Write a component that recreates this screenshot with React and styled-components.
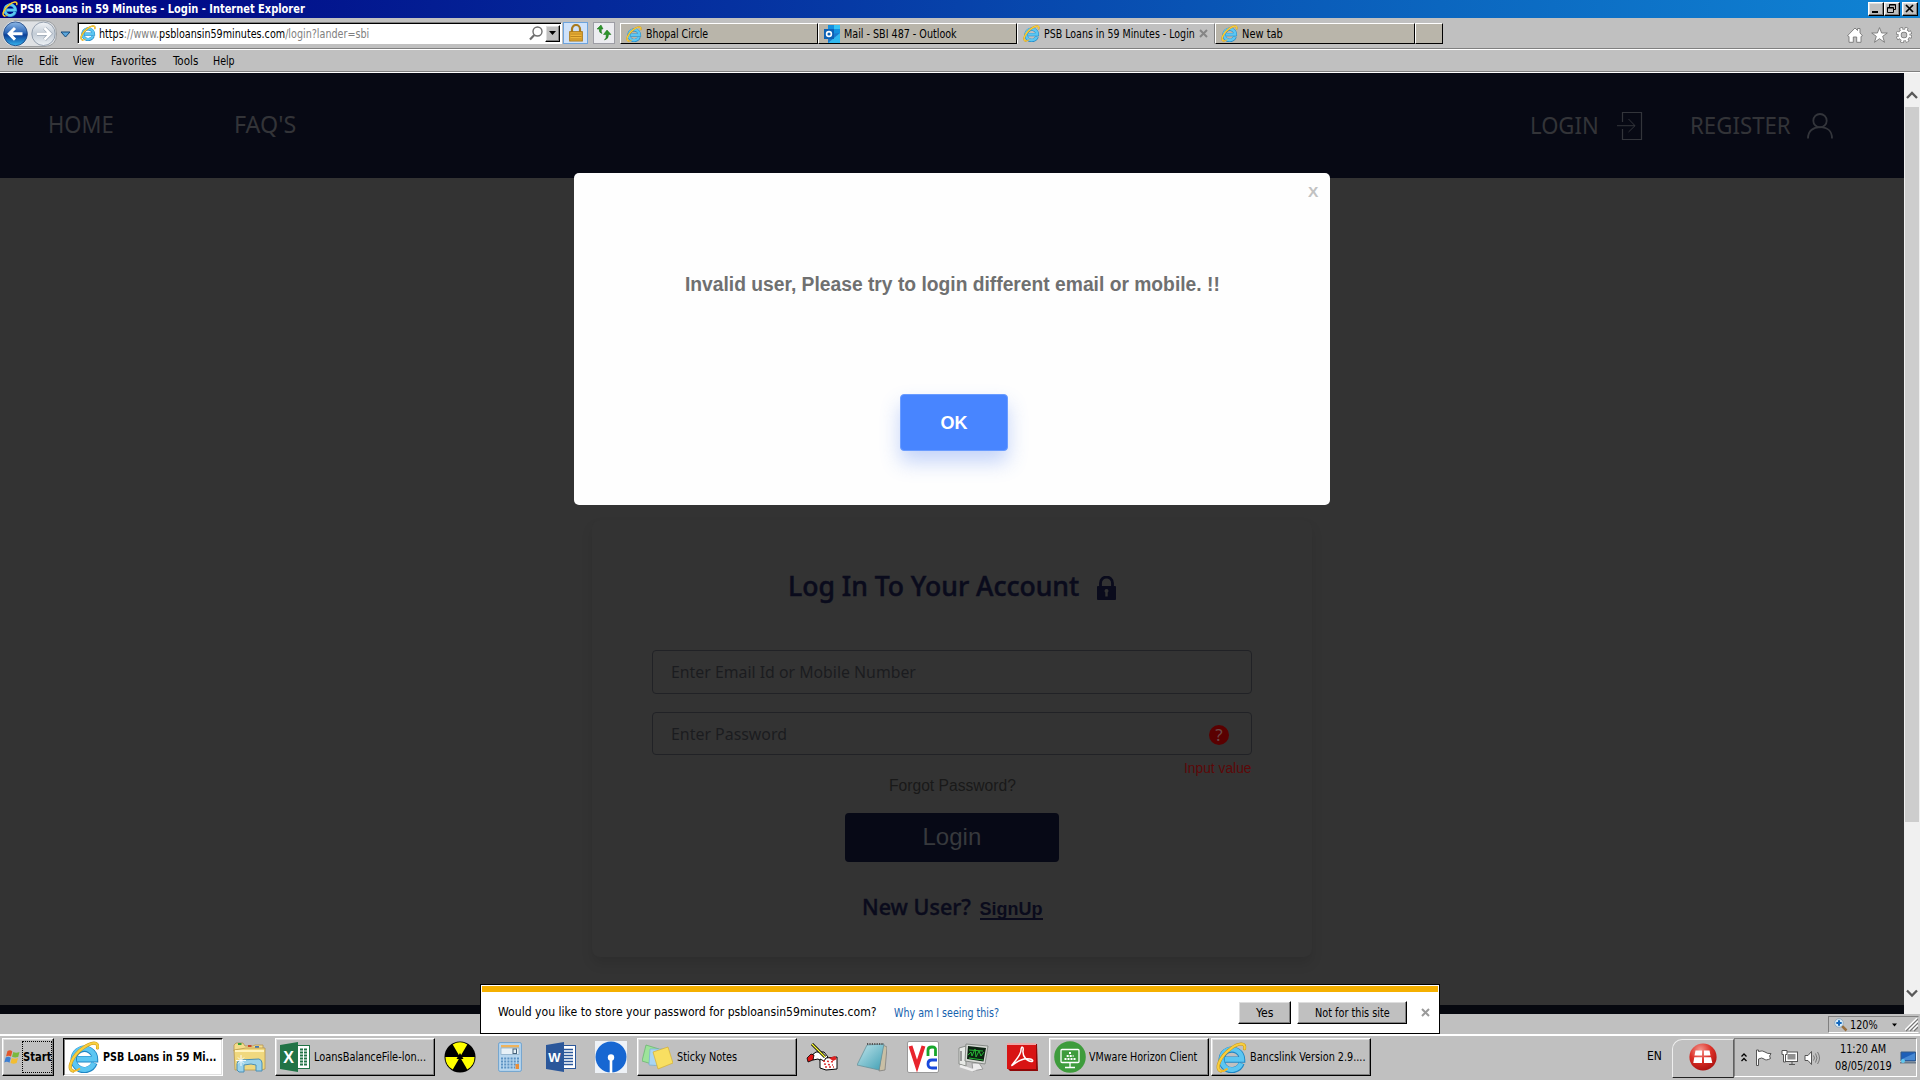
import React, { useLayoutEffect, useRef, useState } from "react";
import styled, { createGlobalStyle, css } from "styled-components";

const tahoma = `"DejaVu Sans Condensed", "DejaVu Sans", sans-serif`;
const myriad = `"Noto Sans", "Open Sans", sans-serif`;
const arial = `"Liberation Sans", sans-serif`;

const GlobalStyle = createGlobalStyle`
  * { box-sizing: border-box; }
  html, body { margin: 0; overflow: hidden; }
  body { font-family: ${tahoma}; font-size: 11.5px; color: #000; }
  svg { display: block; flex: none; }
`;

const FitBox = styled.span`
  display: block;
  flex: none;
  white-space: nowrap;
  font-stretch: condensed;
`;
const FitInner = styled.span`
  display: inline-block;
  transform-origin: 0 50%;
`;

/* Condenses a run of text to an exact width. */
function Fit({ w, children }) {
  const ref = useRef(null);
  const [scale, setScale] = useState(1);
  useLayoutEffect(() => {
    const natural = ref.current.offsetWidth;
    if (natural) setScale(w / natural);
  }, [w]);
  return (
    <FitBox style={{ width: w }}>
      <FitInner ref={ref} style={{ transform: `scaleX(${scale})` }}>
        {children}
      </FitInner>
    </FitBox>
  );
}

const raised = css`
  border: 1px solid;
  border-color: #fff #000 #000 #fff;
  box-shadow: inset -1px -1px 0 #808080, inset 1px 1px 0 #dedede;
`;

const Screen = styled.div`
  width: 1920px;
  height: 1080px;
  display: flex;
  flex-direction: column;
  position: relative;
  overflow: hidden;
  background: #c0c0c0;
`;

const TitleBar = styled.header`
  height: 18px;
  flex: none;
  display: flex;
  align-items: center;
  padding: 0 2px 0 2px;
  gap: 2px;
  color: #fff;
  font-weight: 700;
  line-height: 18px;
  background: linear-gradient(90deg, #000080 0%, #0531a0 38%, #0b66bf 75%, #1084d4 100%);
`;
const Spacer = styled.div`
  flex: 1;
`;
const WindowButton = styled.div`
  width: 16px;
  height: 14px;
  background: #c0c0c0;
  margin-left: ${(p) => p.$ml || 0}px;
  ${raised}
`;
const WindowButtons = styled.div`
  display: flex;
`;

const Toolbar = styled.div`
  height: 32px;
  flex: none;
  display: flex;
  padding: 4px 8px 0 0;
  border-bottom: 1px solid #fff;
  box-shadow: inset 0 -1px 0 #808080;
`;
const NavCluster = styled.div`
  width: 77px;
  height: 26px;
  margin-top: -2px;
`;
const AddressBar = styled.div`
  width: 485px;
  height: 22px;
  display: flex;
  align-items: center;
  background: #fff;
  padding: 0 1px 0 2px;
  border: 1px solid;
  border-color: #808080 #fff #fff #808080;
  box-shadow: inset 1px 1px 0 #000;
  color: #808080;
  b { font-weight: 400; color: #000; }
`;
const UrlText = styled.div`
  margin-left: 3px;
  padding-top: 2px;
  flex: 1;
  line-height: 18px;
`;
const DropButton = styled.div`
  width: 15px;
  height: 17px;
  margin-left: 2px;
  background: #c0c0c0;
  display: flex;
  align-items: center;
  justify-content: center;
  ${raised}
`;
const ToolButton = styled.div`
  width: ${(p) => p.$w}px;
  height: 22px;
  margin-left: ${(p) => p.$ml}px;
  border: 1px solid ${(p) => p.$edge};
  background: ${(p) => p.$bg};
  display: flex;
  align-items: center;
  justify-content: center;
`;
const TabStrip = styled.div`
  display: flex;
  margin-left: 5px;
  height: 22px;
`;
const Tab = styled.div`
  width: ${(p) => p.$w}px;
  display: flex;
  align-items: center;
  gap: 4px;
  padding-left: 5px;
  margin-top: 1px;
  height: 21px;
  line-height: 20px;
  background: ${(p) => (p.$active ? "#c0c0c0" : "#b9b5aa")};
  border: 1px solid;
  border-color: #fff ${(p) => (p.$active ? "#808080" : "#000")} ${(p) => (p.$active ? "#c0c0c0" : "#000")} #fff;
`;
const CommandIcons = styled.div`
  display: flex;
  gap: 8px;
  margin-top: 5px;
`;

const MenuBar = styled.nav`
  height: 23px;
  flex: none;
  display: flex;
  padding-left: 7px;
  line-height: 23px;
  border-bottom: 1px solid #fff;
  box-shadow: inset 0 -1px 0 #808080;
`;
const MenuItem = styled.div`
  margin-right: ${(p) => p.$mr}px;
`;

const Viewport = styled.div`
  height: 941px;
  flex: none;
  display: flex;
`;
const Page = styled.div`
  width: 1904px;
  display: flex;
  flex-direction: column;
  background: #333;
  position: relative;
`;
const SiteNav = styled.nav`
  height: 105px;
  flex: none;
  display: flex;
  align-items: center;
  padding: 0 71px 0 48px;
  background: #070914;
  color: #333438;
  font: 24px/34px ${myriad};
`;
const NavLink = styled.div`
  display: flex;
  align-items: center;
  margin: ${(p) => p.$top || 0}px 0 0 ${(p) => p.$ml || 0}px;
  gap: ${(p) => p.$gap || 0}px;
  > span { padding-bottom: 2px; }
`;
const Main = styled.main`
  flex: 1;
  padding-top: 342px;
`;
const SiteFooter = styled.footer`
  height: 9px;
  background: #06080f;
`;

const Card = styled.section`
  width: 720px;
  height: 437px;
  margin: 0 auto;
  padding: 46px 60px 0;
  border-radius: 8px;
  background: #333;
  box-shadow: 0 7px 12px rgba(0, 0, 0, 0.1);
  display: flex;
  flex-direction: column;
`;
const Heading = styled.h1`
  margin: 0 0 44px 136px;
  height: 40px;
  display: flex;
  align-items: center;
  gap: 18px;
  font: 500 27px/40px ${myriad};
  -webkit-text-stroke: 0.5px #0a0b1c;
  color: #0a0b1c;
  svg { margin-top: 4px; }
`;
const Field = styled.div`
  height: ${(p) => p.$h}px;
  flex: none;
  display: flex;
  align-items: center;
  justify-content: space-between;
  margin-top: ${(p) => p.$mt || 0}px;
  padding: 0 22px 0 18px;
  border: 1px solid #212226;
  border-radius: 4px;
  color: #1b1c1f;
  font: 17px/40px ${myriad};
`;
const HelpBadge = styled.div`
  width: 20px;
  height: 20px;
  margin-top: 2px;
  border-radius: 50%;
  background: #5a0000;
  color: #6b4a4a;
  text-align: center;
  font: 17px/20px ${myriad};
`;
const FieldError = styled.div`
  display: flex;
  justify-content: flex-end;
  margin-top: 5px;
  font: 14px/16px ${arial};
  color: #5c0808;
`;
const ForgotLink = styled.div`
  display: flex;
  justify-content: center;
  font: 16px/20px ${arial};
  color: #191919;
`;
const LoginButton = styled.div`
  width: 214px;
  height: 49px;
  margin: 17px auto 0;
  display: flex;
  align-items: center;
  justify-content: center;
  border-radius: 4px;
  background: #070916;
  color: #37393d;
  font: 24px/47px ${arial};
  padding-bottom: 2px;
`;
const SignUpRow = styled.div`
  height: 30px;
  margin-top: 30px;
  display: flex;
  justify-content: center;
  gap: 9px;
  color: #0a0b1c;
  font: 500 22.5px/30px ${myriad};
  > span { -webkit-text-stroke: 0.4px #0a0b1c; }
`;
const SignUpLink = styled.div`
  margin-top: 6px;
  height: 22px;
  border-bottom: 2px solid #0a0b1c;
  font: 700 18px/22px ${arial};
`;

const Modal = styled.div`
  position: absolute;
  left: 574px;
  top: 100px;
  width: 756px;
  height: 332px;
  border-radius: 5px;
  background: #fefefe;
  display: flex;
  flex-direction: column;
  align-items: center;
`;
const CloseText = styled.div`
  align-self: flex-end;
  margin: 10px 12px 0 0;
  height: 18px;
  font: 700 14px/18px ${arial};
  color: #c2c2c2;
`;
const ModalMessage = styled.div`
  margin-top: 70px;
  font: 700 19.5px/26px ${arial};
  color: #6f7070;
`;
const OkButton = styled.div`
  width: 108px;
  height: 57px;
  margin: 97px 0 0 4px;
  display: flex;
  align-items: center;
  justify-content: center;
  border: 1px solid #6a9cff;
  border-radius: 4px;
  background: #4885ff;
  box-shadow: 0 11px 20px rgba(72, 122, 240, 0.32);
  color: #fff;
  font: 700 18px/54px ${arial};
`;

const ScrollBar = styled.div`
  width: 16px;
  background: #f0f0f0;
  display: flex;
  flex-direction: column;
  align-items: center;
  padding: 18px 0 16px;
`;
const Thumb = styled.div`
  width: 14px;
  height: 715px;
  margin-top: 7px;
  background: #cdcdcd;
`;

const StatusBar = styled.div`
  height: 20px;
  flex: none;
  display: flex;
  justify-content: flex-end;
  padding: 2px 1px 1px;
`;
const ZoomBox = styled.div`
  width: 91px;
  display: flex;
  align-items: center;
  padding-left: 5px;
  line-height: 16px;
  border: 1px solid;
  border-color: #808080 transparent #fff #808080;
`;

const Prompt = styled.div`
  position: absolute;
  left: 480px;
  top: 984px;
  width: 960px;
  height: 50px;
  border: 1px solid #000;
  background: #fff;
  padding: 1px;
`;
const PromptStripe = styled.div`
  height: 6px;
  background: #f5b000;
`;
const PromptRow = styled.div`
  height: 40px;
  display: flex;
  align-items: center;
  padding: 1px 8px 0 16px;
`;
const PromptText = styled.div`
  font-size: 12.5px;
  line-height: 20px;
  padding-bottom: 1px;
`;
const PromptLink = styled.div`
  margin-left: 17px;
  color: #1461ae;
  line-height: 20px;
`;
const PromptButton = styled.div`
  width: ${(p) => p.$w}px;
  height: 23px;
  margin-right: 6px;
  display: flex;
  justify-content: center;
  line-height: 22px;
  background: #c0c0c0;
  ${raised}
`;

const TaskBar = styled.footer`
  height: 46px;
  flex: none;
  display: flex;
  align-items: flex-start;
  border-top: 2px solid #fff;
  padding: 2px 3px 0 2px;
`;
const StartButton = styled.div`
  width: 52px;
  height: 38px;
  display: flex;
  align-items: center;
  padding-left: 1px;
  font-weight: 700;
  background: #c0c0c0;
  ${raised}
`;
const StartLabel = styled.div`
  height: 32px;
  line-height: 31px;
  border: 1px dotted #000;
  margin-left: 1px;
`;
const TaskButton = styled.div`
  width: 160px;
  height: 38px;
  display: flex;
  align-items: center;
  gap: ${(p) => p.$gap || 4}px;
  margin-left: ${(p) => p.$ml}px;
  padding-left: 4px;
  line-height: 35px;
  ${raised}
  ${(p) =>
    p.$active &&
    css`
      font-weight: 700;
      background: #fff;
      border-color: #000 #fff #fff #000;
      box-shadow: inset 1px 1px 0 #808080, inset -1px -1px 0 #e0e0e0;
    `}
`;
const TaskIcon = styled.div`
  width: 32px;
  height: 38px;
  display: flex;
  align-items: center;
  justify-content: center;
  margin-left: ${(p) => p.$ml}px;
`;
const Language = styled.div`
  line-height: 36px;
  font-size: 12px;
  margin-right: 10px;
`;
const RedLauncher = styled.div`
  width: 62px;
  height: 39px;
  margin-top: 1px;
  padding-bottom: 3px;
  display: flex;
  align-items: center;
  justify-content: center;
  border: 1px solid;
  border-color: #eee #606060 #222 #eee;
  border-top-left-radius: 10px;
`;
const Tray = styled.div`
  width: 183px;
  height: 39px;
  display: flex;
  align-items: center;
  padding-left: 6px;
  border: 1px solid;
  border-color: #808080 #fff #fff #808080;
`;
const Clock = styled.div`
  width: 56px;
  margin: 0 9px 0 14px;
  padding-top: 1px;
  display: flex;
  flex-direction: column;
  align-items: center;
  line-height: 17px;
`;
const TrayGap = styled.div`
  width: ${(p) => p.$w}px;
`;

const IE = ({ s }) => (
  <svg width={s} height={s} viewBox="0 0 32 32" fill="none">
    <path d="M26.4 22 A10.6 10.6 0 1 1 27 18.2 H9" stroke="#1f86c4" strokeWidth="6.4" />
    <path d="M26 22 A10.6 10.6 0 1 1 26.8 18 H9" stroke="#5cc6f2" strokeWidth="4.8" />
    <path d="M5 30 C-2 28 5 14 15 7 C23 1 31 0 29.500 7" stroke="#c99612" strokeWidth="3.2" strokeLinecap="round" />
    <path d="M5 30 C-2 28 5 14 15 7 C23 1 31 0 29.500 7" stroke="#f8ce3e" strokeWidth="2.2" strokeLinecap="round" />
    <path d="M5 30 C8 30.500 10 29 12 27.500" stroke="#f0b82a" strokeWidth="2" />
  </svg>
);

const Caret = ({ w = 7 }) => (
  <svg width={w} height="4" viewBox="0 0 7 4"><path d="M0 0H7L3.500 4Z" fill="#000" /></svg>
);

const NavArrows = () => (
  <svg width="77" height="29" viewBox="0 0 77 29">
    <defs>
      <linearGradient id="back" x1="0" y1="0" x2="0" y2="1">
        <stop offset="0" stopColor="#8eb8e6" /><stop offset=".45" stopColor="#2d67b8" />
        <stop offset=".55" stopColor="#0a3e98" /><stop offset="1" stopColor="#37b4ee" />
      </linearGradient>
      <linearGradient id="fwd" x1="0" y1="0" x2="0" y2="1">
        <stop offset="0" stopColor="#f2f4f7" /><stop offset=".5" stopColor="#c3ccd6" /><stop offset="1" stopColor="#eef2f6" />
      </linearGradient>
    </defs>
    <path d="M14 .8 H45 Q56.500 2 56.500 14 Q56.500 26 45 26.500 H14 Z" fill="#dfe1e4" stroke="#8d8f92" strokeWidth=".8" />
    <circle cx="15.500" cy="13.800" r="12.800" fill="#e8edf4" />
    <circle cx="15.500" cy="13.800" r="11.900" fill="url(#back)" stroke="#173d78" strokeWidth=".8" />
    <path d="M9 13.800H22.500M15 8L9.200 13.800L15 19.600" fill="none" stroke="#fff" strokeWidth="3" />
    <circle cx="43.500" cy="13.800" r="11.700" fill="url(#fwd)" stroke="#8c98a8" strokeWidth=".9" />
    <path d="M37 13.800H50M44.500 8L50.200 13.800L44.500 19.600" fill="none" stroke="#9aa5b3" strokeWidth="3.800" />
    <path d="M37 13.800H50M44.500 8L50.200 13.800L44.500 19.600" fill="none" stroke="#fff" strokeWidth="2.600" />
    <path d="M61 12H70L65.500 17Z" fill="#5aa6dc" stroke="#154a7a" strokeWidth="1" />
  </svg>
);

const Magnifier = () => (
  <svg width="15" height="15" viewBox="0 0 15 15" fill="none" stroke="#6e6e6e">
    <circle cx="9.500" cy="5.500" r="4.500" strokeWidth="1.400" /><path d="M6.300 9L2 13.500" strokeWidth="2.200" />
  </svg>
);
const GoldLock = () => (
  <svg width="14" height="18" viewBox="0 0 14 18">
    <path d="M3 9V5a4 4 0 0 1 8 0V9" fill="none" stroke="#a87a20" strokeWidth="2.200" />
    <rect x=".7" y="7.700" width="12.600" height="9.300" fill="#eeb53a" stroke="#a87413" />
    <path d="M1.500 10H12.500M1.500 12.500H12.500M1.500 15H12.500" stroke="#bb8420" />
  </svg>
);
const Refresh = () => (
  <svg width="16" height="16" viewBox="0 0 16 16" fill="#2d962b" stroke="#176c17" strokeWidth=".5">
    <path d="M6 1L2 5H4.200Q4 9 7 9.500Q6 8 6.300 5H8Z" transform="translate(-1 -1)" />
    <path d="M11 5L15 9.500H12.500Q12.500 14 8.500 15Q10.500 13 10.300 9.500H7.500Z" />
  </svg>
);
const Outlook = () => (
  <svg width="16" height="18" viewBox="0 0 16 18">
    <rect x="4" y="0" width="12" height="9" fill="#1490df" /><rect x="10" y="0" width="6" height="4" fill="#35c4f5" />
    <path d="M4 9L16 8V18H4Z" fill="#1a78ce" /><path d="M16 8L4 18H16Z" fill="#30b8ef" />
    <rect x="0" y="4" width="10" height="10" fill="#0d62b5" />
    <circle cx="5" cy="9" r="2.400" fill="none" stroke="#fff" strokeWidth="1.600" />
  </svg>
);
const House = () => (
  <svg width="16" height="16" viewBox="0 0 16 16">
    <path d="M8 1L10.500 3.500V1.500H13V6L15.500 8.700L14 9.500V15.300H9.700V10H6.300V15.300H2V9.500L.5 8.700Z" fill="#fff" stroke="#777" strokeWidth=".9" />
  </svg>
);
const Star = () => (
  <svg width="17" height="16" viewBox="0 0 17 16">
    <path d="M8.500 .6L10.600 6H16.300L11.700 9.300L13.500 15.300L8.500 11.700L3.500 15.300L5.300 9.300L.7 6H6.400Z" fill="#fff" stroke="#777" strokeWidth=".9" />
  </svg>
);
const Gear = () => (
  <svg width="16" height="16" viewBox="0 0 16 16">
    <g fill="none"><circle cx="8" cy="8" r="6" stroke="#777" strokeWidth="4.200" strokeDasharray="2.900 1.812" />
      <circle cx="8" cy="8" r="4.400" stroke="#777" strokeWidth="3.800" />
      <circle cx="8" cy="8" r="6" stroke="#fff" strokeWidth="2.800" strokeDasharray="1.900 2.812" strokeDashoffset="-.5" />
      <circle cx="8" cy="8" r="4.400" stroke="#fff" strokeWidth="2.300" /></g>
  </svg>
);
const LoginGlyph = () => (
  <svg width="26" height="30" viewBox="0 0 26 30" fill="none" stroke="#33353b">
    <path d="M5.500 11V1.500H24.500V28.500H5.500V18" strokeWidth="1.200" /><path d="M0 14.700H18M11.500 8L18 14.700L11.500 21" />
  </svg>
);
const UserGlyph = () => (
  <svg width="26" height="26" viewBox="0 0 26 26" fill="none" stroke="#33353b" strokeWidth="1.800">
    <circle cx="13" cy="7.700" r="6.700" /><path d="M1 25.500C1 18 6 14.200 13 14.200S25 18 25 25.500" />
  </svg>
);
const Padlock = () => (
  <svg width="19" height="24" viewBox="0 0 19 24">
    <path d="M3.500 11V7a6 6 0 0 1 12 0V11" fill="none" stroke="#0a0b1c" strokeWidth="2.800" />
    <rect y="10" width="19" height="14" rx="1" fill="#0a0b1c" />
    <path d="M9.500 13a2 2 0 0 1 1.200 3.600V20.500H8.300V16.600A2 2 0 0 1 9.500 13Z" fill="#333" />
  </svg>
);
const Chevron = ({ down }) => (
  <svg width="12" height="9" viewBox="0 0 12 9" fill="none" stroke="#595959" strokeWidth="2.300">
    <path d={down ? "M1 1.500L6 6.500L11 1.500" : "M1 7L6 2L11 7"} />
  </svg>
);

const WinFlag = () => (
  <svg width="17" height="17" viewBox="0 0 17 17">
    <path d="M3.500 2Q6.500 .5 8.300 2.500L7 7.500Q4.500 6 2 7.500Z" fill="#e2562a" />
    <path d="M9.300 3Q12 4.500 15.500 3L14.200 8Q11 9 8 7.800Z" fill="#7ab93c" />
    <path d="M1.700 8.500Q4.500 7 6.800 8.800L5.500 13.800Q3 12 .3 13.500Z" fill="#3d7fd2" />
    <path d="M7.800 9Q10.500 10.300 14 9L12.700 14Q9.500 15.300 6.500 14Z" fill="#f2bd32" />
  </svg>
);
const Folder = () => (
  <svg width="33" height="32" viewBox="0 0 33 32">
    <path d="M1 4L3 2H10L12 5H20L22 4H30V10H1Z" fill="#f4dd8c" stroke="#b69650" strokeWidth=".8" />
    <rect x="5" y="2" width="3.500" height="2" fill="#35a137" /><rect x="15" y="4" width="3.500" height="2" fill="#c94a2c" /><rect x="22" y="5" width="4" height="2" fill="#3f78bd" />
    <path d="M1 9L13 7H32V28L28 29H2Z" fill="#f0d87e" stroke="#b8984b" strokeWidth=".8" />
    <path d="M2 10H31" stroke="#fff3bd" strokeWidth="2" />
    <path d="M4 29V23Q4 20 7 19L26 18Q29 19 29 22V30H23V24Q19 22 11 24V31H6Z" fill="#9bd2ea" stroke="#4a8fb5" />
    <path d="M8 14V25M3 19.500H13M5 16.500L11 22.500M11 16.500L5 22.500" stroke="#fff" strokeWidth=".9" />
  </svg>
);
const SheetLetter = styled.text`
  font-family: ${arial};
  font-weight: 700;
  text-anchor: middle;
  fill: #fff;
`;
const Sheet = ({ color, letter }) => (
  <svg width="30" height="30" viewBox="0 0 30 30">
    <rect x="14" y="3.500" width="15.500" height="23" fill="#fff" stroke={color} />
    {letter === "X"
      ? <path d="M20 7.500H27M20 10.500H27M20 13.500H27M20 16.500H27M20 19.500H27M20 22.500H27" stroke={color} strokeWidth="1.900" strokeDasharray="3 1" />
      : <path d="M18 7.500H27M18 10.500H27M18 13.500H27M18 16.500H27M18 19.500H27M18 22.500H27" stroke={color} strokeWidth="1.500" />}
    <path d="M0 3L18 0V30L0 27Z" fill={color} />
    <SheetLetter x="8.500" y={letter === "X" ? 20.5 : 19.5} fontSize={letter === "X" ? 16 : 13}>{letter}</SheetLetter>
  </svg>
);
const Radiation = () => (
  <svg width="32" height="32" viewBox="0 0 32 32">
    <circle cx="16" cy="16" r="15.500" fill="#000" />
    <g fill="#ff0">
      <path d="M16 16L8.700 3.400A14.500 14.500 0 0 1 23.300 3.400Z" />
      <path d="M16 16L8.700 3.400A14.500 14.500 0 0 1 23.300 3.400Z" transform="rotate(120 16 16)" />
      <path d="M16 16L8.700 3.400A14.500 14.500 0 0 1 23.300 3.400Z" transform="rotate(240 16 16)" />
    </g>
    <path d="M16 12L19.500 18H12.500Z" fill="#000" />
  </svg>
);
const Calculator = () => (
  <svg width="24" height="30" viewBox="0 0 24 30">
    <rect x=".6" y=".6" width="22.800" height="28.800" rx="1.500" fill="#b8d7ef" stroke="#6fa3ce" />
    <rect x="3" y="3" width="18" height="2.500" fill="#eeb35c" />
    <rect x="3" y="6" width="18" height="6.500" fill="#e7f1f7" stroke="#83a7c2" strokeWidth=".7" />
    <rect x="15" y="7" width="3.500" height="4.500" fill="none" stroke="#46637a" />
    <path d="M3 16.500H21M3 19.500H21M3 22.500H21M3 25.500H17" stroke="#5d93c3" strokeWidth="2" strokeDasharray="2 1.200" />
    <rect x="17.500" y="22" width="3.500" height="5" fill="#e88e3a" />
  </svg>
);
const Keyhole = () => (
  <svg width="32" height="32" viewBox="0 0 32 32">
    <rect width="32" height="32" fill="#eef2f7" /><circle cx="16" cy="16" r="15.500" fill="#1767d2" />
    <circle cx="16" cy="16.500" r="3.200" fill="#fff" /><rect x="14.700" y="17" width="2.600" height="15" fill="#fff" />
  </svg>
);
const Notes = () => (
  <svg width="31" height="26" viewBox="0 0 31 26">
    <path d="M4 1L17 5L13 21L0 17Z" fill="#9de39a" stroke="#62b367" strokeWidth=".7" />
    <path d="M8 5L23 5L22 22L7 21Z" fill="#a9d5f3" stroke="#75aed2" strokeWidth=".7" />
    <path d="M11 8L26 3L31 19L16 25Z" fill="#f8df61" stroke="#d4ae32" strokeWidth=".7" />
  </svg>
);
const Painter = () => (
  <svg width="32" height="28" viewBox="0 0 32 28">
    <path d="M6 12L10 9H18L22 14L17 19L12 16L7 17Z" fill="#fff" stroke="#000" />
    <path d="M1 15L5 11L8 12L7 17L2 19Z" fill="#e01515" stroke="#000" strokeWidth=".8" />
    <path d="M6 1L19 14" stroke="#000" strokeWidth="3" /><path d="M6 1L19 14" stroke="#ff3" strokeWidth="1.300" />
    <path d="M14 16L18 18L20 15L31 14V26L20 27L14 25Z" fill="#fff" stroke="#000" />
    <path d="M17 18L29 19M18 21L27 22M19 24H28" stroke="#d33" strokeWidth="1.500" strokeDasharray="2 2" />
    <path d="M23 15L29 13L31 16L27 18Z" fill="#d22" />
  </svg>
);
const NotepadIcon = () => (
  <svg width="30" height="30" viewBox="0 0 30 30">
    <defs><linearGradient id="pad" x1="0" y1="0" x2="1" y2="1"><stop offset="0" stopColor="#c3e6ec" /><stop offset="1" stopColor="#3f9fb4" /></linearGradient></defs>
    <path d="M26 3L30 5L28 28L22 29Z" fill="#c9bfa5" stroke="#777" strokeWidth=".7" />
    <path d="M10 3L27 2L22 28L0 23Z" fill="url(#pad)" stroke="#68929b" strokeWidth=".8" />
    <path d="M10 2H27" stroke="#555" strokeWidth="2" strokeDasharray="1.200 1.200" />
  </svg>
);
const Vnc = () => (
  <svg width="32" height="32" viewBox="0 0 32 32" fill="none">
    <rect x=".5" y=".5" width="31" height="31" rx="1.500" fill="#fff" stroke="#999" />
    <path d="M3.500 5L10 25L16.500 5" stroke="#e8252d" strokeWidth="4" />
    <path d="M21 15V9Q21 6 25 6T28.500 9V15" stroke="#18a62c" strokeWidth="2.800" />
    <path d="M30 19H25Q21 19 21 23T25 27H30" stroke="#1949dc" strokeWidth="2.800" />
  </svg>
);
const Monitor = () => (
  <svg width="31" height="29" viewBox="0 0 31 29">
    <path d="M1 5L8 3V23L1 21Z" fill="#e7e9e6" stroke="#898c88" /><path d="M3 8V18" stroke="#999" strokeWidth="2" />
    <path d="M14 20L21 20L25 26L15 28Z" fill="#ececec" stroke="#999" /><path d="M2 23L14 27L18 26" stroke="#eee" strokeWidth="2.500" fill="none" />
    <path d="M8 1L30 3L27 21L7 18Z" fill="#d7dad5" stroke="#868986" />
    <path d="M10 3L28 5L25.500 18.500L9 16Z" fill="#0c2211" />
    <path d="M10 12L13 9L14 13L17 6L18 14L21 8L23 13L26 9M11 7L25 8M11 15L25 17" fill="none" stroke="#27b536" />
  </svg>
);
const Acrobat = () => (
  <svg width="31" height="28" viewBox="0 0 31 28">
    <path d="M0 1H30L31 28H3L0 25Z" fill="#8f0808" /><rect x="0" y="0" width="29" height="26" fill="#d81414" /><path d="M0 0H29V2H0Z" fill="#eda7a7" />
    <path d="M5 22C8 18 14 12 14 7C14 3 17 3 16 8C15.500 13 20 19 25 18.500C28 17 21 14 14 17C9 18.500 4 24 5 22Z" fill="none" stroke="#fff" strokeWidth="1.500" />
  </svg>
);
const Horizon = () => (
  <svg width="32" height="32" viewBox="0 0 32 32" fill="none">
    <circle cx="16" cy="16" r="15.800" fill="#3e9c3c" />
    <rect x="7" y="8.500" width="18" height="13" rx="1" stroke="#fff" strokeWidth="1.300" />
    <path d="M16 22V26M11 26.500H21" stroke="#fff" strokeWidth="1.300" />
    <path d="M15 12H17M12.700 15H19.500M10.500 18H22" stroke="#fff" strokeWidth="2" strokeDasharray="2 1" />
  </svg>
);
const RedWindows = () => (
  <svg width="28" height="28" viewBox="0 0 28 28">
    <defs><radialGradient id="red" cx=".4" cy=".25" r=".8"><stop offset="0" stopColor="#f49a91" /><stop offset=".5" stopColor="#dc3027" /><stop offset="1" stopColor="#a60f0d" /></radialGradient></defs>
    <circle cx="14" cy="14" r="13.600" fill="url(#red)" />
    <path d="M6.500 7.500H13V12.500H5.500ZM15 7.500H20.500L21.500 12.500H15ZM5.300 14.300H13V20H4.300ZM15 14.300H22L23.300 20H15Z" fill="#fff" />
  </svg>
);
const DoubleUp = () => (
  <svg width="6" height="9" viewBox="0 0 6 9" fill="none" stroke="#000" strokeWidth="1.300"><path d="M.5 3.500L3 1L5.500 3.500M.5 8L3 5.500L5.500 8" /></svg>
);
const FlagIcon = () => (
  <svg width="17" height="17" viewBox="0 0 17 17"><path d="M1.500 1V16.500H3.500V10Q7 8 9 10T15.500 9.500Q13.500 7 16 4.500Q12.500 5 10 3T3.500 2.500V1Z" fill="#fff" stroke="#555" /></svg>
);
const NetIcon = () => (
  <svg width="17" height="17" viewBox="0 0 17 17" stroke="#555">
    <rect x="4.500" y="3" width="12" height="9.500" fill="#fff" /><rect x="6.500" y="5" width="8" height="5.500" fill="#909090" stroke="none" />
    <path d="M8 15.500H14M11 12.500V15" fill="none" /><path d="M1 1.500V5.500H2.500V13H4.500V5.500H6V1.500Z" fill="#fff" />
  </svg>
);
const SoundIcon = () => (
  <svg width="17" height="16" viewBox="0 0 17 16" fill="none" stroke="#555">
    <path d="M1 5.500H4L7.500 1.500V14.500L4 10.500H1Z" fill="#fff" /><path d="M9.500 5.500Q11.500 8 9.500 10.500M11.500 3.500Q14.500 8 11.500 12.500M13.500 2Q17.500 8 13.500 14" stroke="#777" />
  </svg>
);
const DesktopIcon = () => (
  <svg width="16" height="13" viewBox="0 0 16 13"><path d="M1 1H15.500V10H1Z" fill="#1e5fb8" stroke="#345a86" /><path d="M2 8L15 2V9H2Z" fill="#62a3e2" opacity=".6" /><path d="M0 11H16V12.500H0Z" fill="#6b7b8b" /><circle cx="3" cy="10" r="2" fill="#61c8ef" /></svg>
);
const ZoomGlyph = () => (
  <svg width="14" height="14" viewBox="0 0 14 14"><path d="M7.500 7.500L12.500 12.500" stroke="#9a7040" strokeWidth="2.500" /><circle cx="5" cy="5" r="4.300" fill="#d9edfa" stroke="#93aabd" /><path d="M5 2.300V7.700M2.300 5H7.700" stroke="#1367bd" strokeWidth="2" /></svg>
);
const Grip = () => (
  <svg width="13" height="14" viewBox="0 0 13 14" stroke="#777" strokeWidth="1.300"><path d="M1 13L13 1M5 13L13 5M9 13L13 9" /><path d="M0 12L12 0M4 12L13 3M8 12L13 7" stroke="#fff" /></svg>
);
const Cross = ({ color = "#858585" }) => (
  <svg width="9" height="9" viewBox="0 0 9 9" stroke={color} strokeWidth="2"><path d="M1 1L8 8M8 1L1 8" /></svg>
);

const menus = [["File", 16, 16], ["Edit", 19, 15], ["View", 22, 16], ["Favorites", 46, 16], ["Tools", 25, 15], ["Help", 22, 0]];

export default function App() {
  return (
    <Screen>
      <GlobalStyle />
      <TitleBar>
        <IE s={16} />
        <Fit w={285}>PSB Loans in 59 Minutes - Login - Internet Explorer</Fit>
        <Spacer />
        <WindowButtons>
          <WindowButton><svg width="14" height="12"><path d="M3 9H9" stroke="#000" strokeWidth="2" /></svg></WindowButton>
          <WindowButton><svg width="14" height="12" fill="none" stroke="#000"><path d="M4.500 4V1.500H10.500V6.500H9M4.500 2H10.500" /><path d="M2.500 4.500H8.500V9.500H2.500ZM2.500 5H8.500" /></svg></WindowButton>
          <WindowButton $ml={2}><svg width="14" height="12" stroke="#000" strokeWidth="1.700"><path d="M3 2L10 9M10 2L3 9" /></svg></WindowButton>
        </WindowButtons>
      </TitleBar>

      <Toolbar>
        <NavCluster><NavArrows /></NavCluster>
        <AddressBar>
          <IE s={16} />
          <UrlText><Fit w={270}><b>https</b>://www.<b>psbloansin59minutes.com</b>/login?lander=sbi</Fit></UrlText>
          <Magnifier />
          <DropButton><Caret /></DropButton>
        </AddressBar>
        <ToolButton $w={25} $ml={1} $bg="#cfe2fa" $edge="#6da3dc"><GoldLock /></ToolButton>
        <ToolButton $w={22} $ml={5} $bg="#ececf0" $edge="#9d9da5"><Refresh /></ToolButton>
        <TabStrip>
          <Tab $w={198}><IE s={16} /><Fit w={62}>Bhopal Circle</Fit></Tab>
          <Tab $w={199}><Outlook /><Fit w={113}>Mail - SBI 487 - Outlook</Fit></Tab>
          <Tab $w={198} $active><IE s={17} /><Fit w={151}>PSB Loans in 59 Minutes - Login</Fit><Cross /></Tab>
          <Tab $w={200}><IE s={17} /><Fit w={41}>New tab</Fit></Tab>
          <Tab $w={28} />
        </TabStrip>
        <Spacer />
        <CommandIcons><House /><Star /><Gear /></CommandIcons>
      </Toolbar>

      <MenuBar>
        {menus.map(([label, w, mr]) => (
          <MenuItem key={label} $mr={mr}><Fit w={w}>{label}</Fit></MenuItem>
        ))}
      </MenuBar>

      <Viewport>
        <Page>
          <SiteNav>
            <NavLink $top={-2}><Fit w={66}>HOME</Fit></NavLink>
            <NavLink $ml={120} $top={-2}><Fit w={62}>FAQ'S</Fit></NavLink>
            <Spacer />
            <NavLink $gap={18} $top={1}><Fit w={69}>LOGIN</Fit><LoginGlyph /></NavLink>
            <NavLink $gap={16} $ml={47} $top={1}><Fit w={101}>REGISTER</Fit><UserGlyph /></NavLink>
          </SiteNav>
          <Main>
            <Card>
              <Heading><Fit w={291}>Log In To Your Account</Fit><Padlock /></Heading>
              <Field $h={44}><Fit w={245}>Enter Email Id or Mobile Number</Fit></Field>
              <Field $h={43} $mt={18}><Fit w={116}>Enter Password</Fit><HelpBadge>?</HelpBadge></Field>
              <FieldError><Fit w={68}>Input value</Fit></FieldError>
              <ForgotLink><Fit w={127}>Forgot Password?</Fit></ForgotLink>
              <LoginButton><Fit w={59}>Login</Fit></LoginButton>
              <SignUpRow>
                <Fit w={109}>New User?</Fit>
                <SignUpLink><Fit w={63}>SignUp</Fit></SignUpLink>
              </SignUpRow>
            </Card>
          </Main>
          <SiteFooter />
          <Modal>
            <CloseText><Fit w={10}>X</Fit></CloseText>
            <ModalMessage><Fit w={535}>Invalid user, Please try to login different email or mobile. !!</Fit></ModalMessage>
            <OkButton><Fit w={27}>OK</Fit></OkButton>
          </Modal>
        </Page>
        <ScrollBar><Chevron /><Thumb /><Spacer /><Chevron down /></ScrollBar>
      </Viewport>

      <StatusBar>
        <ZoomBox>
          <ZoomGlyph /><TrayGap $w={2} /><Fit w={28}>120%</Fit><TrayGap $w={14} /><Caret w={5} /><Spacer /><Grip />
        </ZoomBox>
      </StatusBar>

      <TaskBar>
        <StartButton><WinFlag /><StartLabel><Fit w={28}>Start</Fit></StartLabel></StartButton>
        <TaskButton $ml={9} $gap={3} $active><IE s={32} /><Fit w={113}>PSB Loans in 59 Mi...</Fit></TaskButton>
        <TaskIcon $ml={10}><Folder /></TaskIcon>
        <TaskButton $ml={10}><Sheet color="#217346" letter="X" /><Fit w={112}>LoansBalanceFile-lon...</Fit></TaskButton>
        <TaskIcon $ml={9}><Radiation /></TaskIcon>
        <TaskIcon $ml={18}><Calculator /></TaskIcon>
        <TaskIcon $ml={19}><Sheet color="#2b579a" letter="W" /></TaskIcon>
        <TaskIcon $ml={18}><Keyhole /></TaskIcon>
        <TaskButton $ml={10}><Notes /><Fit w={60}>Sticky Notes</Fit></TaskButton>
        <TaskIcon $ml={9}><Painter /></TaskIcon>
        <TaskIcon $ml={18}><NotepadIcon /></TaskIcon>
        <TaskIcon $ml={19}><Vnc /></TaskIcon>
        <TaskIcon $ml={18}><Monitor /></TaskIcon>
        <TaskIcon $ml={17}><Acrobat /></TaskIcon>
        <TaskButton $ml={11} $gap={3}><Horizon /><Fit w={108}>VMware Horizon Client</Fit></TaskButton>
        <TaskButton $ml={2} $gap={3}><IE s={31} /><Fit w={116}>Bancslink Version 2.9....</Fit></TaskButton>
        <Spacer />
        <Language><Fit w={15}>EN</Fit></Language>
        <RedLauncher><RedWindows /></RedLauncher>
        <Tray>
          <DoubleUp /><TrayGap $w={9} /><FlagIcon /><TrayGap $w={9} /><NetIcon /><TrayGap $w={7} /><SoundIcon />
          <Clock><Fit w={46}>11:20 AM</Fit><Fit w={57}>08/05/2019</Fit></Clock>
          <DesktopIcon />
        </Tray>
      </TaskBar>

      <Prompt>
        <PromptStripe />
        <PromptRow>
          <PromptText><Fit w={379}>Would you like to store your password for psbloansin59minutes.com?</Fit></PromptText>
          <PromptLink><Fit w={105}>Why am I seeing this?</Fit></PromptLink>
          <Spacer />
          <PromptButton $w={53}><Fit w={18}>Yes</Fit></PromptButton>
          <PromptButton $w={110}><Fit w={75}>Not for this site</Fit></PromptButton>
          <TrayGap $w={8} /><Cross color="#9a9a9a" />
        </PromptRow>
      </Prompt>
    </Screen>
  );
}
